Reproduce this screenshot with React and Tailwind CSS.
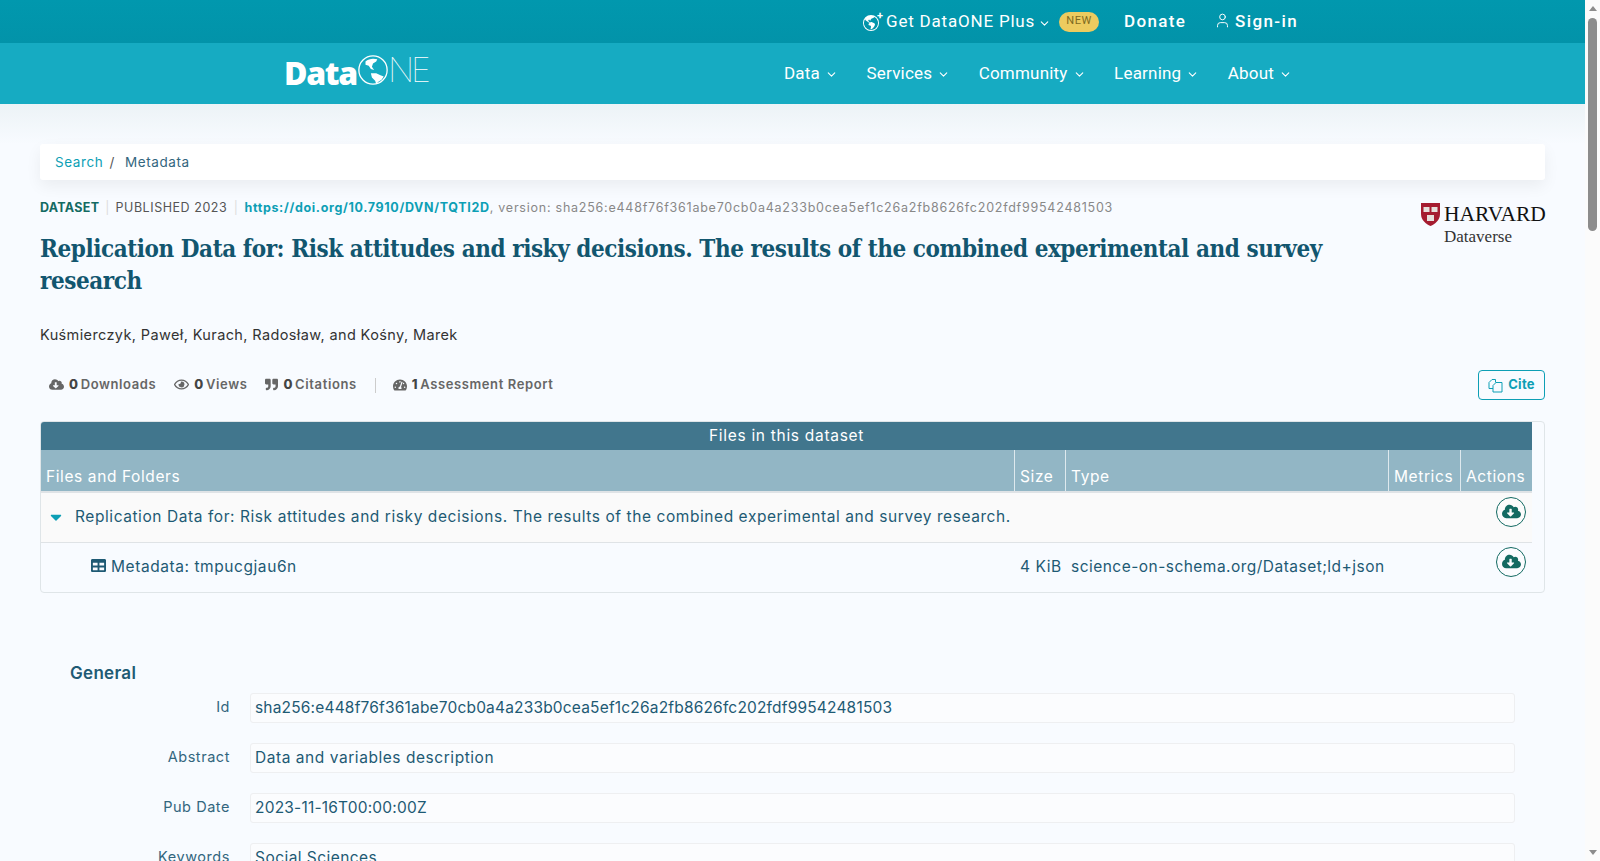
import { ChevronDown, User } from "lucide-react";
import { FaCloudDownloadAlt, FaRegEye, FaQuoteRight, FaTachometerAlt, FaTable, FaCaretDown } from "react-icons/fa";
import { BsGlobeAmericas } from "react-icons/bs";

const plex = "font-['Roboto',sans-serif]";
const work = "font-['Inter',sans-serif]";

const navLinks = ["Data", "Services", "Community", "Learning", "About"];

const fields = [
    { label: "Id", value: "sha256:e448f76f361abe70cb0a4a233b0cea5ef1c26a2fb8626fc202fdf99542481503", track: "tracking-[0.18px]" },
    { label: "Abstract", value: "Data and variables description", track: "tracking-[0.55px]" },
    { label: "Pub Date", value: "2023-11-16T00:00:00Z", track: "tracking-[0.2px]" },
    { label: "Keywords", value: "Social Sciences", track: "tracking-[0.45px]" },
];

function Caret() {
    return <ChevronDown size={13} strokeWidth={2} className="mt-[2px]" />;
}

function DataOneLogo() {
    return (
        <div className="flex items-center text-white h-[44px]">
            <span className="font-['Open_Sans',sans-serif] font-extrabold text-[32px] tracking-[-1.3px] leading-none mt-[-1px]">Data</span>
            <svg width="30" height="30" viewBox="0 0 28 28" className="mt-[-8px] ml-[1px] shrink-0">
                <circle cx="14" cy="14" r="13.2" fill="none" stroke="white" strokeWidth="1.2" />
                <path d="M7 6C10 3 15 3 18 4L17 6L14 8L13 11L15 14L12 13L10 10L7 9z" fill="white" />
                <path d="M12 17L17 17L21 19L24 20L22 23L19 25L17 27L16 24L13 21z" fill="white" />
            </svg>
            <span className="font-['Inter',sans-serif] font-thin text-[34px] leading-none tracking-[-3px] mt-[-8px]">NE</span>
        </div>
    );
}

function HarvardLogo() {
    return (
        <div className="w-[124px] shrink-0 mt-[3px]">
            <div className="flex items-center">
                <svg width="19" height="23" viewBox="0 0 19 23" className="mr-[4px] shrink-0">
                    <path d="M0 0h19v11c0 6-5 10-9.500 12C5 21 0 17 0 11z" fill="#a51c30" />
                    <rect x="2.500" y="4" width="6" height="5" fill="#e6e0dc" />
                    <rect x="10.500" y="4" width="6" height="5" fill="#e6e0dc" />
                    <rect x="6" y="12" width="7" height="6" fill="#e6e0dc" />
                </svg>
                <span className="font-['Liberation_Serif',serif] text-[21.500px] text-[#111] leading-none">HARVARD</span>
            </div>
            <div className="font-['Liberation_Serif',serif] text-[17px] text-[#333] leading-none pl-[23px] mt-[2px]">Dataverse</div>
        </div>
    );
}

function CloudButton() {
    return (
        <div className="w-[30px] h-[30px] rounded-full border border-[#136a62] bg-white/40 flex items-center justify-center">
            <FaCloudDownloadAlt size={19} className="text-[#136a62] mb-[2px]" />
        </div>
    );
}

function Stat({ icon, count, label }) {
    return (
        <span className="flex items-center gap-[5px] text-[13px] tracking-[0.62px] font-semibold text-[#666]">
            {icon}
            <span><b className="font-extrabold text-[#444] mr-[2px]">{count}</b>{label}</span>
        </span>
    );
}

function Scrollbar() {
    return (
        <div className="w-[15px] shrink-0 bg-[#fbfbfb] flex flex-col items-center relative">
            <div className="mt-[6px] w-0 h-0 border-x-[4px] border-x-transparent border-b-[5px] border-b-[#8c8c8c]" />
            <div className="mt-[7px] w-[9px] h-[213px] rounded-[5px] bg-[#8c8c8c]" />
            <div className="mt-auto mb-[6px] w-0 h-0 border-x-[4px] border-x-transparent border-t-[5px] border-t-[#8c8c8c]" />
        </div>
    );
}

export default function App() {
    return (
        <div className="h-screen overflow-hidden flex">
            <div className={`flex-1 min-w-0 overflow-hidden bg-[#f8fbff] ${work}`}>
                {/* top bar */}
                <div className={`h-[43px] bg-gradient-to-b from-[#0198ae] to-[#0293a9] flex items-center text-white ${plex}`}>
                    <div className="ml-[863px] flex items-center">
                        <span className="relative w-[18px] h-[18px] mr-[5px]">
                            <BsGlobeAmericas size={16} className="absolute left-0 top-[2px]" />
                            <span className="absolute right-[-2px] top-[-4px] text-[11px] font-bold leading-[14px]">+</span>
                        </span>
                        <span className="text-[17px] tracking-[0.8px]">Get DataONE Plus</span>
                        <ChevronDown size={13} strokeWidth={2} className="ml-[3px] mt-[3px]" />
                        <span className="ml-[8px] h-[20px] w-[40px] rounded-[10px] bg-[#edcb5f] text-[#7d6a1f] text-[11px] tracking-[0.6px] flex items-center justify-center">NEW</span>
                        <span className="ml-[25px] text-[17px] font-medium tracking-[1.3px]">Donate</span>
                        <User size={17} strokeWidth={1.4} className="ml-[28px] mr-[4px] mb-[2px]" />
                        <span className="text-[17px] font-medium tracking-[1.4px]">Sign-in</span>
                    </div>
                </div>

                {/* main nav */}
                <div className={`h-[61px] bg-[#16abc2] flex items-center text-white ${plex}`}>
                    <div className="ml-[284px] w-[146px]">
                        <DataOneLogo />
                    </div>
                    <div className="ml-[354px] flex items-center gap-[28.500px] text-[17px] tracking-[0.2px]">
                        {navLinks.map((link) => (
                            <span key={link} className="flex items-center gap-[5px]">
                                {link}
                                <Caret />
                            </span>
                        ))}
                    </div>
                </div>
                <div className="h-[40px] bg-gradient-to-b from-[#ecf3f6] to-[#f8fbff]" />

                <div className="px-[40px]">
                    {/* breadcrumb */}
                    <div className="h-[36px] bg-white rounded-[3px] shadow-[0_6px_16px_rgba(0,0,0,0.06)] flex items-center pl-[15px] text-[13.500px] tracking-[0.6px] text-[#33667e]">
                        <span className="text-[#0d9fb5]">Search</span>
                        <span className="ml-[6px] mr-[10px] text-[#555]">/</span>
                        <span>Metadata</span>
                    </div>

                    <div className="flex justify-between mt-[20px]">
                        <div className="w-[1300px]">
                            {/* citation line */}
                            <div className="flex items-center text-[12.500px] leading-[16px] text-[#555] whitespace-nowrap">
                                <span className="font-bold tracking-[0.3px] text-[#136a62]">DATASET</span>
                                <span className="mx-[6px] text-[#ddd]">|</span>
                                <span className="tracking-[0.55px]">PUBLISHED 2023</span>
                                <span className="mx-[6.500px] text-[#ddd]">|</span>
                                <span className="font-bold tracking-[0.65px] text-[#0d9fb5]">https://doi.org/10.7910/DVN/TQTI2D</span>
                                <span className="tracking-[0.76px] text-[#888]">, version: sha256:e448f76f361abe70cb0a4a233b0cea5ef1c26a2fb8626fc202fdf99542481503</span>
                            </div>
                            <h1 className="mt-[17px] font-['DejaVu_Serif',serif] [font-stretch:condensed] font-bold text-[24px] tracking-[-0.44px] leading-[32px] text-[#12566f]">
                                Replication Data for: Risk attitudes and risky decisions. The results of the combined experimental and survey research
                            </h1>
                        </div>
                        <HarvardLogo />
                    </div>

                    <div className="mt-[27px] text-[14.500px] tracking-[0.38px] leading-[22px] text-[#333]">Kuśmierczyk, Paweł, Kurach, Radosław, and Kośny, Marek</div>

                    {/* stats */}
                    <div className="mt-[24px] flex items-center h-[30px]">
                        <div className="flex items-center pl-[9px]">
                            <Stat icon={<FaCloudDownloadAlt size={15} className="mb-[2px]" />} count="0" label="Downloads" />
                            <span className="w-[18px]" />
                            <Stat icon={<FaRegEye size={15} className="mb-[1px]" />} count="0" label="Views" />
                            <span className="w-[18px]" />
                            <Stat icon={<FaQuoteRight size={13} className="mb-[2px]" />} count="0" label="Citations" />
                            <span className="ml-[18px] mr-[17px] h-[15px] w-px bg-[#ccc]" />
                            <Stat icon={<FaTachometerAlt size={14} className="mb-[1px]" />} count="1" label="Assessment Report" />
                        </div>
                        <div className="ml-auto h-[30px] w-[67px] rounded-[4px] border border-[#0d9fb5] flex items-center justify-center gap-[5px] text-[#0d9fb5] text-[13px] font-bold tracking-[0.3px]">
                            <svg width="15" height="15" viewBox="0 0 15 15" fill="none" stroke="currentColor" strokeWidth="1">
                                <path d="M5 10.500H1V4.500L4 1.500h3.500v3" />
                                <path d="M5 14V7.500L8 4.500h6V14z" />
                            </svg>
                            Cite
                        </div>
                    </div>

                    {/* files table */}
                    <div className="mt-[21px] h-[172px] border border-[#dfe5e8] rounded-[4px] overflow-hidden">
                        <div className="mr-[12px]">
                            <div className="h-[28px] bg-[#41768d] text-white text-[15.500px] tracking-[0.7px] flex items-center justify-center">Files in this dataset</div>
                            <div className="h-[41px] bg-[#92b6c5] text-white text-[15.500px] tracking-[0.6px] flex items-end divide-x divide-white/70">
                                <div className="w-[974px] h-full flex items-end pl-[5px] pb-[3px]">Files and Folders</div>
                                <div className="w-[51px] h-full flex items-end pl-[5px] pb-[3px]">Size</div>
                                <div className="w-[323px] h-full flex items-end pl-[5px] pb-[3px]">Type</div>
                                <div className="w-[72px] h-full flex items-end pl-[5px] pb-[3px]">Metrics</div>
                                <div className="flex-1 h-full flex items-end pl-[5px] pb-[3px]">Actions</div>
                            </div>
                            <div className="h-[2px] bg-[#dfe3e6]" />
                            <div className="h-[50px] pb-[2px] bg-[#fafafa] border-b border-[#dfe3e6] flex items-center text-[15.500px] tracking-[0.57px] text-[#1e5a74] relative">
                                <FaCaretDown size={18} className="text-[#0d9fb5] ml-[6px] mr-[10px]" />
                                <span>Replication Data for: Risk attitudes and risky decisions. The results of the combined experimental and survey research.</span>
                                <div className="absolute right-[6px] top-[4px]"><CloudButton /></div>
                            </div>
                            <div className="h-[49px] pb-[2px] flex items-center text-[15.500px] tracking-[0.57px] text-[#1e5a74] relative">
                                <div className="w-[974px] flex items-center pl-[50px]">
                                    <FaTable size={15} className="mr-[5px] mb-[2px]" />
                                    <span>Metadata: tmpucgjau6n</span>
                                </div>
                                <div className="w-[51px] pl-[5px]">4 KiB</div>
                                <div className="pl-[5px] tracking-[0.47px]">science-on-schema.org/Dataset;ld+json</div>
                                <div className="absolute right-[6px] top-[4px]"><CloudButton /></div>
                            </div>
                        </div>
                    </div>

                    {/* general section */}
                    <div className="mt-[68px] pl-[30px] text-[17px] tracking-[0.3px] leading-[24px] font-semibold text-[#1e5a74]">General</div>
                    <div className="mt-[8px] flex flex-col gap-[20px]">
                        {fields.map((f) => (
                            <div key={f.label} className="flex items-start">
                                <div className="w-[190px] mt-[1px] text-right text-[14.500px] tracking-[0.55px] leading-[26px] text-[#33667e] shrink-0">{f.label}</div>
                                <div className={`ml-[20px] flex-1 mr-[30px] h-[30px] border border-[#eeeff1] rounded-[3px] bg-[#fbfcfe] flex items-center pl-[4px] text-[15.500px] text-[#1e5a74] ${f.track}`}>{f.value}</div>
                            </div>
                        ))}
                    </div>
                </div>
            </div>
            <Scrollbar />
        </div>
    );
}
